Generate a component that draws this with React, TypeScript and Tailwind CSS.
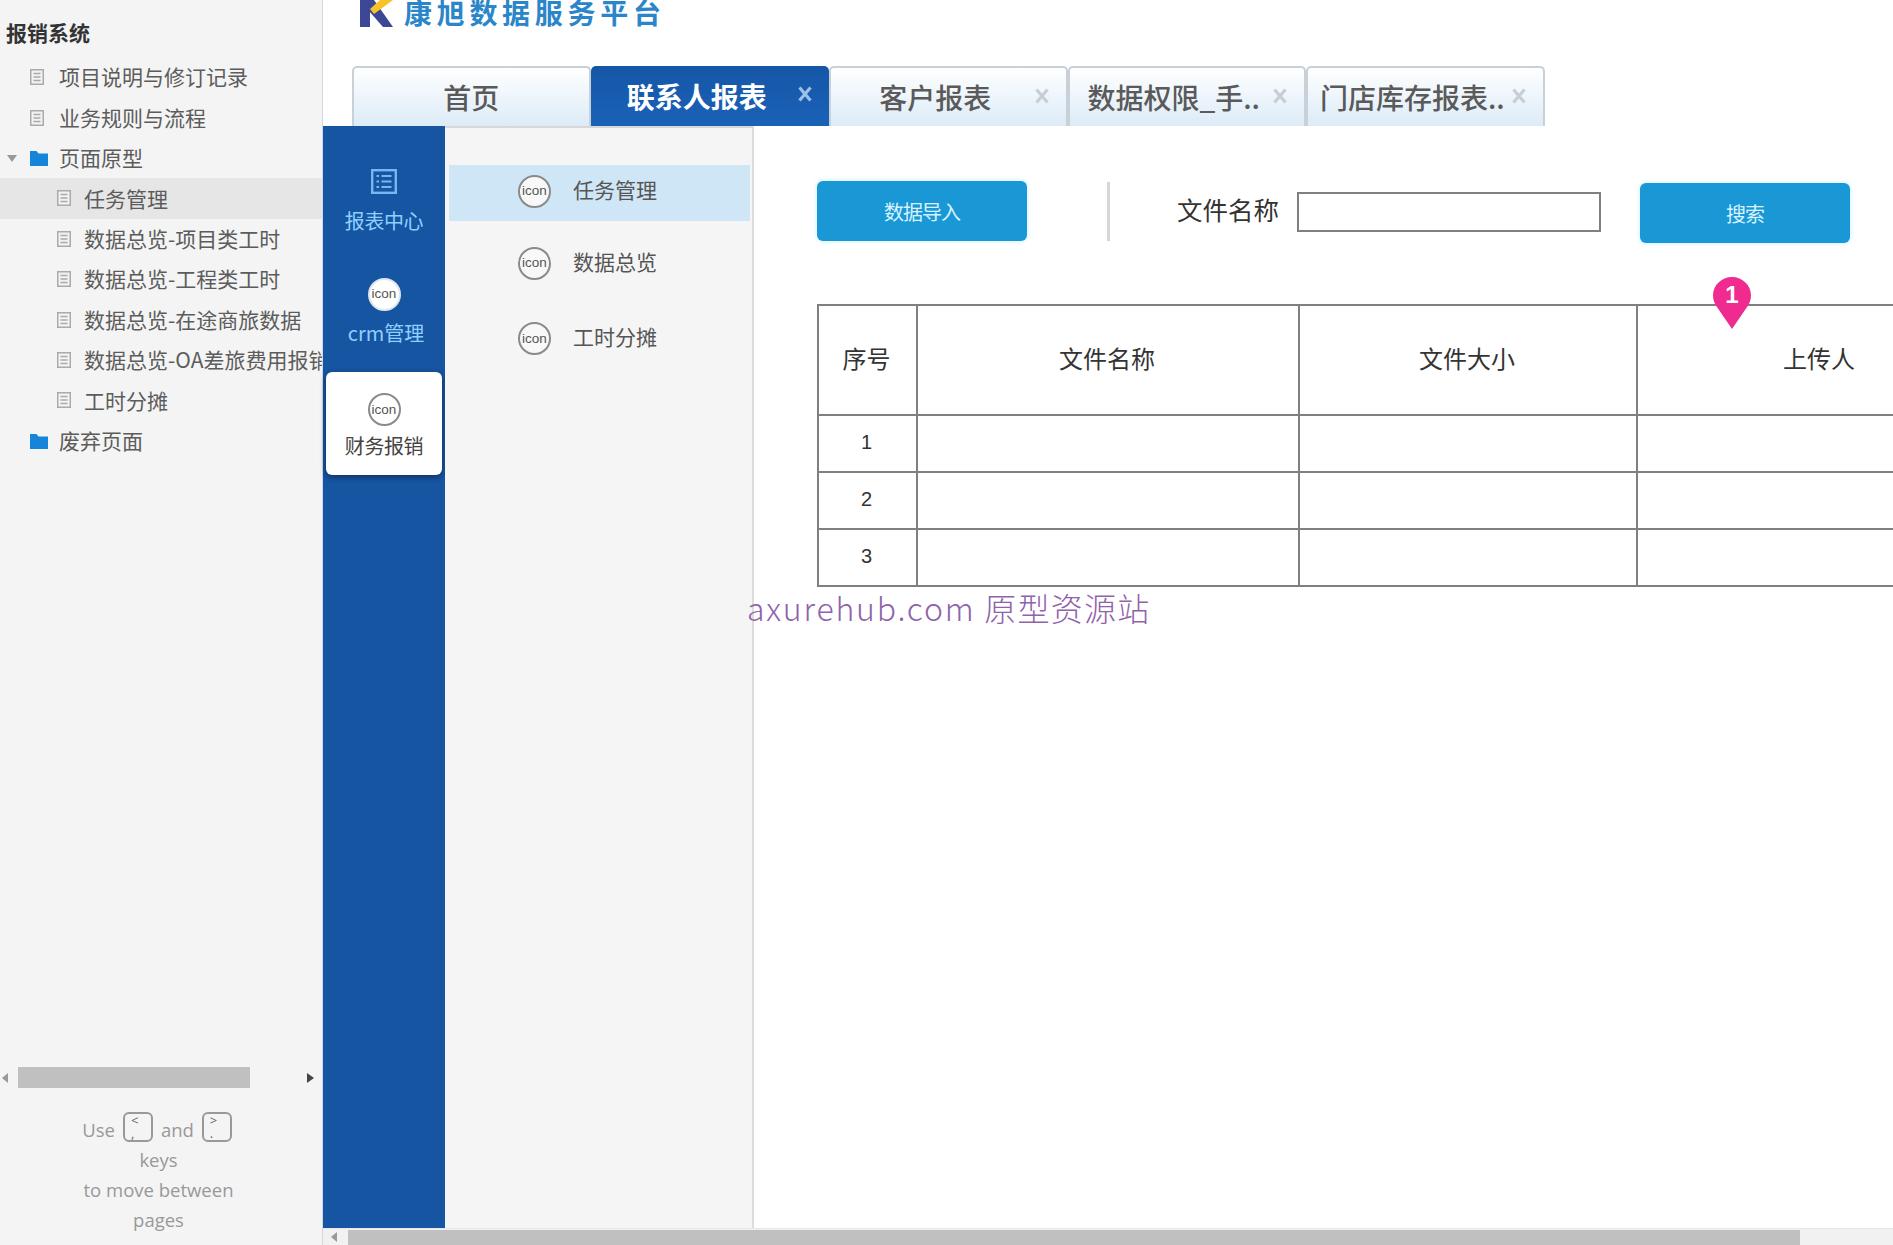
const cjk = "font-['Noto_Sans_CJK_SC','Noto_Sans',sans-serif]";

const tree = [
  { label: "项目说明与修订记录", level: 1, kind: "page" },
  { label: "业务规则与流程", level: 1, kind: "page" },
  { label: "页面原型", level: 1, kind: "folder", open: true },
  { label: "任务管理", level: 2, kind: "page", active: true },
  { label: "数据总览-项目类工时", level: 2, kind: "page" },
  { label: "数据总览-工程类工时", level: 2, kind: "page" },
  { label: "数据总览-在途商旅数据", level: 2, kind: "page" },
  { label: "数据总览-OA差旅费用报销", level: 2, kind: "page" },
  { label: "工时分摊", level: 2, kind: "page" },
  { label: "废弃页面", level: 1, kind: "folder" },
];

const tabs = [
  { label: "首页" },
  { label: "联系人报表", active: true, close: true },
  { label: "客户报表", close: true },
  { label: "数据权限_手..", close: true },
  { label: "门店库存报表..", close: true },
];

function PageIcon() {
  return (
    <svg width="14" height="16" viewBox="0 0 14 16" className="shrink-0">
      <rect x="0.75" y="0.75" width="12.5" height="14.5" fill="#f2f2f2" stroke="#aaaaaa" strokeWidth="1.5" />
      <path d="M3.5 4.5h7M3.5 8h7M3.5 11.5h7" stroke="#aaaaaa" strokeWidth="1.3" />
    </svg>
  );
}

function FolderIcon() {
  return (
    <svg width="18" height="16" viewBox="0 0 18 16" className="shrink-0">
      <path d="M0 1h6.5l2 2.5H18V16H0z" fill="#1485d8" />
    </svg>
  );
}

function IconCircle({ light }: { light?: boolean }) {
  return (
    <div
      className={`flex h-[33px] w-[33px] shrink-0 items-center justify-center rounded-full border-2 border-[#8a8a8a] text-[13.5px] leading-none text-[#555] font-['Liberation_Sans',sans-serif] ${
        light ? "bg-[#f8f8f8]" : "bg-white"
      }`}
    >
      icon
    </div>
  );
}

function KeyCap({ top, bottom }: { top: string; bottom: string }) {
  return (
    <span className="inline-flex h-[30px] w-[30px] flex-col items-start rounded-md border-2 border-[#999] pl-[6px] text-[13px] leading-[13px] text-[#666]">
      <span>{top}</span>
      <span>{bottom}</span>
    </span>
  );
}

function Sidebar() {
  return (
    <aside className="flex w-[322px] shrink-0 flex-col overflow-hidden bg-[#f4f4f4]">
      <div className="flex h-[57px] shrink-0 items-center pl-[6px] pt-[9px] text-[21px] font-bold text-[#333]">
        报销系统
      </div>
      <ul className="flex-1 text-[21px] text-[#5c5c5c]">
        {tree.map((t) => (
          <li
            key={t.label}
            className={`relative flex h-[40.4px] items-center whitespace-nowrap ${
              t.level === 2 ? "pl-[57px]" : "pl-[30px]"
            } ${t.active ? "bg-[#e6e6e6]" : ""}`}
          >
            {t.open && <span className="absolute left-[7px] top-[17px] h-0 w-0 border-x-[5px] border-t-[7px] border-x-transparent border-t-[#999]" />}
            {t.kind === "folder" ? <FolderIcon /> : <PageIcon />}
            <span className={t.kind === "folder" ? "ml-[11px]" : t.level === 2 ? "ml-[13px]" : "ml-[15px]"}>{t.label}</span>
          </li>
        ))}
      </ul>
      <div className="flex h-[21px] shrink-0 items-center">
        <span className="ml-[2px] h-0 w-0 border-y-[5px] border-r-[6px] border-y-transparent border-r-[#999]" />
        <div className="ml-[10px] h-[21px] w-[232px] bg-[#c0c0c0]" />
        <span className="ml-[57px] h-0 w-0 border-y-[5px] border-l-[7px] border-y-transparent border-l-[#444]" />
      </div>
      <div className="mt-[21px] flex h-[136px] shrink-0 flex-col items-center pr-[5px] text-[18.5px] leading-[30px] text-[#999] font-['Open_Sans',sans-serif]">
        <div className="mr-[3px] flex items-center gap-[8px]">
          <span className="mt-[6px]">Use</span>
          <KeyCap top="<" bottom="," />
          <span className="mt-[6px]">and</span>
          <KeyCap top=">" bottom="." />
        </div>
        <div>keys</div>
        <div>to move between</div>
        <div>pages</div>
      </div>
    </aside>
  );
}

function Header() {
  return (
    <div className="h-[126px] shrink-0 overflow-hidden bg-white pl-[29px]">
      <div className="flex h-[66px] items-start">
        <svg width="34" height="27" viewBox="0 0 34 27" className="ml-[8px] shrink-0">
          <path d="M0 0h10v27H0z" fill="#3c4796" />
          <path d="M8 0h6l19 27H23L9 11z" fill="#3c4796" />
          <path d="M20 0H33L14 14 10 9z" fill="#f7c325" />
        </svg>
        <div className={`-mt-[6px] ml-[10px] whitespace-nowrap text-[28px] font-bold leading-[36px] tracking-[4.7px] text-[#2a86c9] ${cjk}`}>
          康旭数据服务平台
        </div>
      </div>
      <div className="flex h-[60px] items-stretch">
        {tabs.map((t) => (
          <div
            key={t.label}
            className={
              t.active
                ? "relative flex w-[238.5px] items-center justify-center rounded-t-[5px] bg-gradient-to-b from-[#1656a6] to-[#1a62b8] text-[28px] font-bold text-white"
                : "relative flex w-[238.5px] items-center justify-center rounded-t-[5px] border-2 border-b-0 border-[#c8d0d8] bg-gradient-to-b from-white to-[#dcebf7] text-[28px] font-medium text-[#5a5a5a]"
            }
          >
            <span className={`whitespace-nowrap ${t.close ? "pr-[26px]" : ""}`}>{t.label}</span>
            {t.close && (
              <svg
                width="14"
                height="16"
                viewBox="0 0 14 16"
                className={`absolute right-[17px] top-[20px] ${t.active ? "text-[#9cc0ea]" : "text-[#c8ced4]"}`}
              >
                <path d="M1.5 1.5 12.5 14.5M12.5 1.5 1.5 14.5" stroke="currentColor" strokeWidth="3.2" />
              </svg>
            )}
          </div>
        ))}
      </div>
    </div>
  );
}

function NavRail() {
  return (
    <nav className="flex w-[122px] shrink-0 flex-col items-center bg-[#1655a2] pt-[43px] text-[20px]">
      <svg width="26" height="25" viewBox="0 0 26 25" fill="none" stroke="#78b6f0" strokeWidth="2.4">
        <rect x="1.2" y="1.2" width="23.6" height="22.6" />
        <path d="M5.5 7h2.5M10.5 7h10M5.5 12.5h2.5M10.5 12.5h10M5.5 18h2.5M10.5 18h10" strokeWidth="2" />
      </svg>
      <div className="mt-[12px] leading-[30px] tracking-[-0.4px] text-[#8ed0ff]">报表中心</div>
      <div className="mt-[42px] flex h-[33px] w-[33px] items-center justify-center rounded-full border-2 border-[#dfe6ee] bg-white text-[13.5px] text-[#555] font-['Liberation_Sans',sans-serif]">
        icon
      </div>
      <div className="ml-[4px] mt-[7px] leading-[30px] text-[#8ed0ff]">crm管理</div>
      <div className="mt-[24px] flex h-[103px] w-[116px] flex-col items-center rounded-[6px] bg-white pt-[21px] text-[#444] shadow-[0_2px_6px_rgba(0,0,0,0.45)]">
        <IconCircle />
        <div className="mt-[5px] leading-[30px] tracking-[-0.4px]">财务报销</div>
      </div>
    </nav>
  );
}

function SubMenu() {
  const items = [
    { label: "任务管理", active: true, top: "mt-[37px]" },
    { label: "数据总览", top: "mt-[16px]" },
    { label: "工时分摊", top: "mt-[19.5px]" },
  ];
  return (
    <div className="w-[309px] shrink-0 border-r-2 border-t-2 border-r-[#dcdcdc] border-t-[#d8d8d8] bg-[#f5f5f5] pl-[4px] pr-[2px] text-[21px] text-[#555]">
      {items.map((m) => (
        <div
          key={m.label}
          className={`flex h-[56px] items-center pl-[69px] ${m.top} ${m.active ? "bg-[#cfe6f6]" : ""}`}
        >
          <div className="-mt-[4px]">
            <IconCircle light />
          </div>
          <span className="-mt-[7px] ml-[22px]">{m.label}</span>
        </div>
      ))}
    </div>
  );
}

function DataTable() {
  const rows = ["1", "2", "3"];
  return (
    <table className="w-[1185px] table-fixed border-collapse border-2 border-[#808080] text-[#333]">
      <colgroup>
        <col className="w-[99px]" />
        <col className="w-[382px]" />
        <col className="w-[338px]" />
        <col className="w-[366px]" />
      </colgroup>
      <thead>
        <tr className="h-[110px] text-[24px]">
          {["序号", "文件名称", "文件大小", "上传人"].map((h) => (
            <th key={h} className="border-2 border-[#808080] pb-[4px] pr-[2px] font-normal">
              {h}
            </th>
          ))}
        </tr>
      </thead>
      <tbody>
        {rows.map((r) => (
          <tr key={r} className="h-[57px] text-[20px]">
            <td className="border-2 border-[#808080] pb-[4px] pr-[2px] text-center font-['Liberation_Sans',sans-serif]">{r}</td>
            <td className="border-2 border-[#808080]" />
            <td className="border-2 border-[#808080]" />
            <td className="border-2 border-[#808080]" />
          </tr>
        ))}
      </tbody>
    </table>
  );
}

function Content() {
  const btn =
    "h-[60px] w-[210px] shrink-0 rounded-[6px] bg-[#1a98d5] pt-[2px] text-[20px] tracking-[-1px] text-[#d8f3ff] shadow-[0_0_4px_rgba(120,220,255,0.5)]";
  return (
    <div className="relative min-w-0 flex-1 overflow-hidden bg-white">
      <div className="flex items-start pl-[63px] pt-[55px]">
        <button className={btn}>数据导入</button>
        <div className="ml-[80px] mt-[1px] h-[59px] w-[3px] shrink-0 bg-[#d6d6d6]" />
        <div className="ml-[67px] mt-[8px] w-[120px] shrink-0 text-[25.5px] leading-[40px] text-[#333]">文件名称</div>
        <input className="mt-[11px] h-[40px] w-[304px] shrink-0 border-2 border-[#808080] bg-white" />
        <button className={`ml-[39px] mt-[2px] ${btn}`}>搜索</button>
      </div>
      <div className="ml-[63px] mt-[61px]">
        <DataTable />
      </div>
      {/* 标注 */}
      <div className="absolute left-[959px] top-[151px] flex h-[52px] w-[38px] justify-center">
        <svg width="38" height="52" viewBox="0 0 38 52" className="absolute inset-0">
          <path d="M19 0C8.5 0 0 8.2 0 18.5c0 5 2 9 5 13L19 52l14-20.5c3-4 5-8 5-13C38 8.2 29.5 0 19 0z" fill="#f02b8f" />
        </svg>
        <span className="relative mt-[4px] text-[24px] font-bold leading-[28px] text-white font-['Liberation_Sans',sans-serif]">1</span>
      </div>
    </div>
  );
}

function BottomBar() {
  return (
    <div className="flex h-[17px] shrink-0 items-end border-t border-[#e8e8e8] bg-[#f1f1f1]">
      <span className="mb-[3px] ml-[8px] h-0 w-0 border-y-[5px] border-r-[6px] border-y-transparent border-r-[#999]" />
      <div className="ml-[11px] h-[15px] w-[1452px] bg-[#c0c0c0]" />
    </div>
  );
}

export default function App() {
  return (
    <div className={`flex h-[1245px] w-[1893px] overflow-hidden bg-white ${cjk}`}>
      <Sidebar />
      <div className="flex min-w-0 flex-1 flex-col border-l border-[#cfd8e0]">
        <Header />
        <div className="relative flex min-h-0 flex-1">
          <NavRail />
          <SubMenu />
          <Content />
          {/* 水印 */}
          <div className="absolute left-[424px] top-[458px] whitespace-nowrap text-[32px] font-light leading-[46px] tracking-[1.2px] text-[#8e63ab]">
            <span className="tracking-[1.8px]">axurehub.com </span>原型资源站
          </div>
        </div>
        <BottomBar />
      </div>
    </div>
  );
}
